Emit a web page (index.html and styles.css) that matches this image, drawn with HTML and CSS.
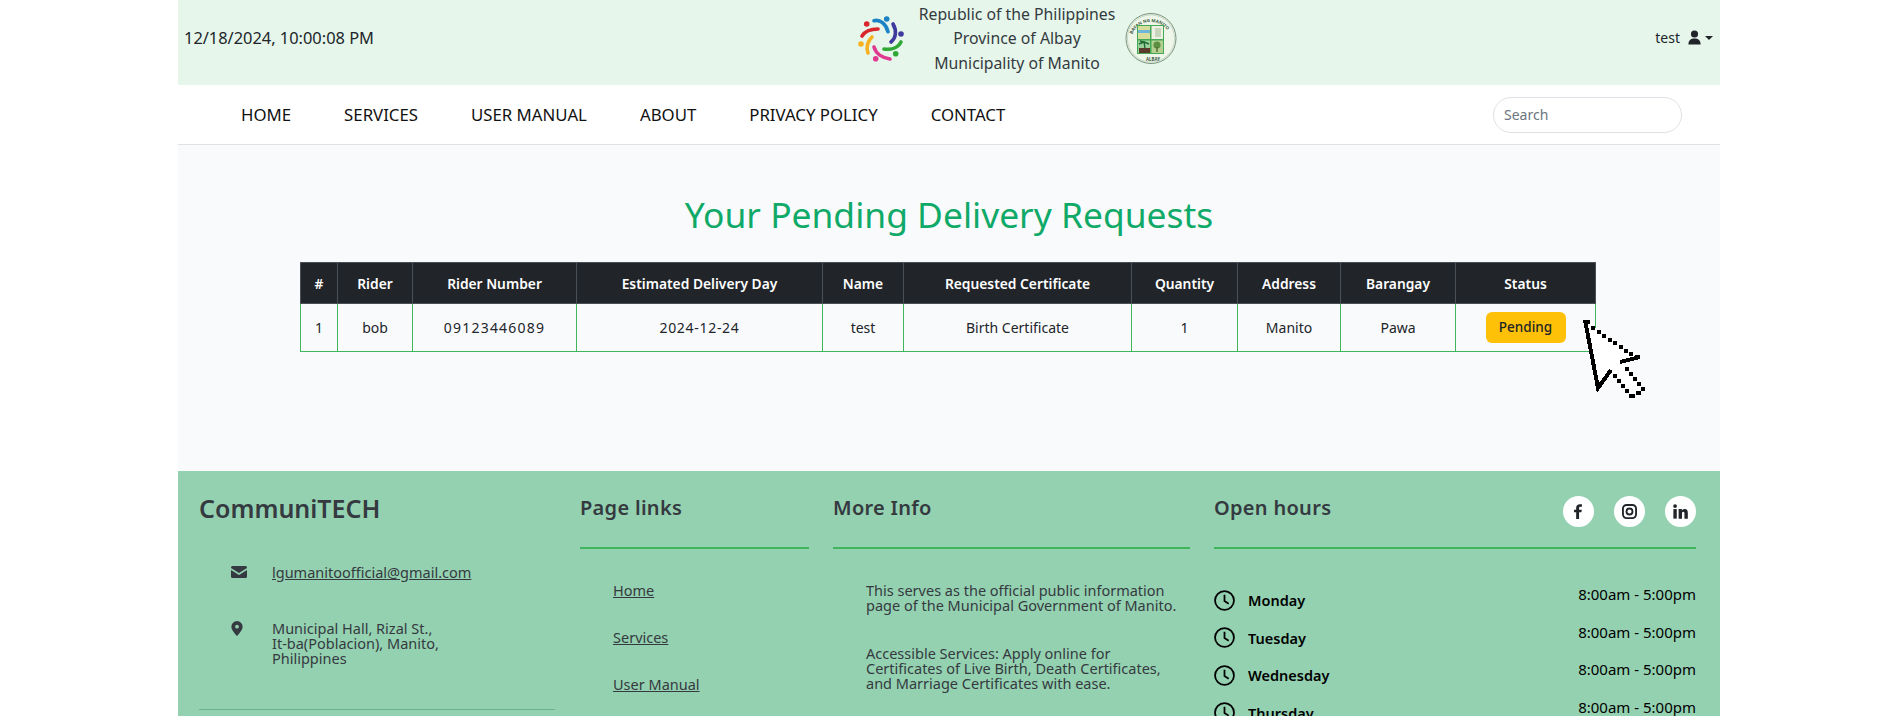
FILE: index.html
```html
<!DOCTYPE html>
<html>
    <head>
        <link rel="stylesheet" href="styles.css">
        <title>Your Pending Delivery Requests</title>
    </head>
    <body>
        <div class="page">
            <header class="top-bar">
                <div class="clock">12/18/2024, 10:00:08 PM</div>
                <div class="brand">
                    <svg class="logo-people" viewBox="0 0 60 60">
                        <g fill="none" stroke-width="3.6" stroke-linecap="round">
                            <path d="M7 26 C10 21 16 19 23 19" stroke="#d9252b"/>
                            <path d="M19 10.7 C25 9 31 14 33 21.7" stroke="#1b82c5"/>
                            <path d="M38 14 C42 21 41 28 36 32" stroke="#3f3a9e"/>
                            <path d="M29 39 C36 40 43 38 46 32" stroke="#2fa836"/>
                            <path d="M19 37 C21 44 28 48 35 49" stroke="#e0398f"/>
                            <path d="M17 27 C13 31 11 37 13 43" stroke="#f6b221"/>
                        </g>
                        <circle cx="11.7" cy="14" r="2.8" fill="#d9252b"/>
                        <circle cx="31.7" cy="9" r="2.8" fill="#1b82c5"/>
                        <circle cx="46" cy="24" r="2.8" fill="#3f3a9e"/>
                        <circle cx="40.7" cy="43.7" r="2.8" fill="#2fa836"/>
                        <circle cx="20.7" cy="48.7" r="2.8" fill="#e0398f"/>
                        <circle cx="6" cy="34" r="2.8" fill="#f6b221"/>
                    </svg>
                    <div class="brand-text">
                        <div>Republic of the Philippines</div>
                        <div>Province of Albay</div>
                        <div>Municipality of Manito</div>
                    </div>
                    <svg class="logo-seal" viewBox="0 0 60 60">
                        <circle cx="31" cy="30.5" r="25" fill="#eef6ea" stroke="#5b7a60" stroke-width=".8"/>
                        <circle cx="31" cy="30.5" r="23.6" fill="none" stroke="#8aa68d" stroke-width=".4"/>
                        <path id="seal-arc" d="M11 30 A20.5 20.5 0 0 1 51 30" fill="none"/>
                        <text class="seal-text"><textPath href="#seal-arc" startOffset="4">BAYAN NG MANITO</textPath></text>
                        <text class="seal-text" x="26" y="52.5">ALBAY</text>
                        <rect x="17" y="17" width="27" height="29" fill="#43a955"/>
                        <rect x="18" y="18" width="12" height="13" fill="#d7dd9a"/>
                        <rect x="18" y="22" width="12" height="3" fill="#6fb6d8"/>
                        <rect x="31.5" y="18" width="11.5" height="13" fill="#eef0e4"/>
                        <rect x="35" y="20" width="6" height="9" fill="#c8d5bd"/>
                        <rect x="18" y="32.5" width="12" height="12.5" fill="#9dcf9a"/>
                        <path d="M24 33 L25 41 M24 34 L19 36 M24 34 L29 36 M24 34 L20 33" stroke="#1f6a34" stroke-width="1.4" fill="none"/>
                        <rect x="19" y="40" width="11" height="5" fill="#5a3a2a"/>
                        <rect x="31.5" y="32.5" width="11.5" height="12.5" fill="#b4cf8f"/>
                        <circle cx="37" cy="37" r="3.6" fill="#5d8f43"/>
                        <rect x="36.4" y="39" width="1.2" height="5" fill="#4a5a2a"/>
                    </svg>
                </div>
                <div class="user">
                    <span>test</span>
                    <svg class="user-icon" viewBox="0 0 16 16"><circle cx="8" cy="4.2" r="3.8"/><path d="M1.5 15.5 C1.5 11 4 9 8 9 C12 9 14.5 11 14.5 15.5 Z"/></svg>
                    <span class="caret"></span>
                </div>
            </header>

            <nav class="main-nav">
                <ul class="nav-links">
                    <li>HOME</li>
                    <li>SERVICES</li>
                    <li>USER MANUAL</li>
                    <li>ABOUT</li>
                    <li>PRIVACY POLICY</li>
                    <li>CONTACT</li>
                </ul>
                <input class="search" type="text" placeholder="Search">
            </nav>

            <main class="content">
                <h1 class="page-title">Your Pending Delivery Requests</h1>
                <table class="requests">
                    <thead>
                        <tr>
                            <th>#</th>
                            <th>Rider</th>
                            <th>Rider Number</th>
                            <th>Estimated Delivery Day</th>
                            <th>Name</th>
                            <th>Requested Certificate</th>
                            <th>Quantity</th>
                            <th>Address</th>
                            <th>Barangay</th>
                            <th>Status</th>
                        </tr>
                    </thead>
                    <tbody>
                        <tr>
                            <td>1</td>
                            <td>bob</td>
                            <td class="phone">09123446089</td>
                            <td class="date">2024-12-24</td>
                            <td>test</td>
                            <td>Birth Certificate</td>
                            <td>1</td>
                            <td>Manito</td>
                            <td>Pawa</td>
                            <td><span class="badge">Pending</span></td>
                        </tr>
                    </tbody>
                </table>
            </main>

            <footer class="footer">
                <div class="col col-contact">
                    <h2 class="brand-name">CommuniTECH</h2>
                    <div class="contact-row first">
                        <svg class="contact-icon" viewBox="0 0 16 12"><path d="M0 1.5 A1.5 1.5 0 0 1 1.5 0 H14.5 A1.5 1.5 0 0 1 16 1.5 V2 L8 7 L0 2 Z"/><path d="M0 4 L8 9 L16 4 V10.5 A1.5 1.5 0 0 1 14.5 12 H1.5 A1.5 1.5 0 0 1 0 10.5 Z"/></svg>
                        <a class="link">lgumanitoofficial@gmail.com</a>
                    </div>
                    <div class="contact-row second">
                        <svg class="contact-icon pin" viewBox="0 0 12 16"><path fill-rule="evenodd" d="M6 0 A6 6 0 0 1 12 6 C12 9 8 14 6 16 C4 14 0 9 0 6 A6 6 0 0 1 6 0 Z M6 4 A2 2 0 1 0 6 8 A2 2 0 1 0 6 4 Z"/></svg>
                        <div class="address">Municipal Hall, Rizal St.,<br>It-ba(Poblacion), Manito,<br>Philippines</div>
                    </div>
                    <div class="contact-rule"></div>
                </div>

                <div class="col col-links">
                    <h3 class="col-title">Page links</h3>
                    <ul class="page-links">
                        <li><a class="link">Home</a></li>
                        <li><a class="link">Services</a></li>
                        <li><a class="link">User Manual</a></li>
                    </ul>
                </div>

                <div class="col col-info">
                    <h3 class="col-title">More Info</h3>
                    <div class="info-text">
                        <p>This serves as the official public information page of the Municipal Government of Manito.</p>
                        <p>Accessible Services: Apply online for Certificates of Live Birth, Death Certificates, and Marriage Certificates with ease.</p>
                    </div>
                </div>

                <div class="col col-hours">
                    <div class="hours-head">
                        <h3 class="col-title">Open hours</h3>
                        <div class="socials">
                            <span class="social"><svg viewBox="0 0 12 18"><path d="M3.2 18 V10 H0.6 V6.8 H3.2 V4.6 C3.2 1.7 5 0.2 7.5 0.2 C8.7 0.2 9.8 0.3 10.1 0.4 V3.2 H8.4 C7 3.2 6.7 3.9 6.7 4.8 V6.8 H10 L9.5 10 H6.7 V18 Z"/></svg></span>
                            <span class="social"><svg viewBox="0 0 16 16"><rect x="1" y="1" width="14" height="14" rx="4" fill="none" stroke="#212529" stroke-width="2"/><circle cx="8" cy="8" r="3.2" fill="none" stroke="#212529" stroke-width="2"/></svg></span>
                            <span class="social"><svg viewBox="0 0 16 16"><circle cx="2.2" cy="2.2" r="2"/><rect x="0.4" y="5.4" width="3.6" height="10.2"/><path d="M6 5.4 H9.4 V6.9 C10 5.9 11.2 5.2 12.6 5.2 C15 5.2 15.8 6.9 15.8 9.4 V15.6 H12.2 V10.2 C12.2 9 11.9 8.2 10.9 8.2 C9.9 8.2 9.6 9 9.6 10.2 V15.6 H6 Z"/></svg></span>
                        </div>
                    </div>
                    <ul class="hours">
                        <li><span class="day"><svg class="clock-icon" viewBox="0 0 20 20"><circle cx="10" cy="10" r="9"/><path d="M10 4.5 V10.5 L14 13"/></svg>Monday</span><span class="time">8:00am - 5:00pm</span></li>
                        <li><span class="day"><svg class="clock-icon" viewBox="0 0 20 20"><circle cx="10" cy="10" r="9"/><path d="M10 4.5 V10.5 L14 13"/></svg>Tuesday</span><span class="time">8:00am - 5:00pm</span></li>
                        <li><span class="day"><svg class="clock-icon" viewBox="0 0 20 20"><circle cx="10" cy="10" r="9"/><path d="M10 4.5 V10.5 L14 13"/></svg>Wednesday</span><span class="time">8:00am - 5:00pm</span></li>
                        <li><span class="day"><svg class="clock-icon" viewBox="0 0 20 20"><circle cx="10" cy="10" r="9"/><path d="M10 4.5 V10.5 L14 13"/></svg>Thursday</span><span class="time">8:00am - 5:00pm</span></li>
                    </ul>
                </div>
            </footer>

            <!-- mouse pointer sitting on top of the table -->
            <svg class="pointer" viewBox="0 0 68 84" shape-rendering="crispEdges">
                <path d="M5 5 L18 72 L30 54 L50 79 L63 74 L41 46 L60 41 Z" fill="#fff"/>
                <path d="M5 4 L18 72 L31 54 M40 46 L60 41" fill="none" stroke="#000" stroke-width="4"/>
                <path d="M6 4 h4 v4 h-4 Z M11 10 h4 v4 h-4 Z M17 14 h4 v4 h-4 Z M22 18 h4 v4 h-4 Z M28 22 h4 v4 h-4 Z M33 25 h4 v4 h-4 Z M39 29 h4 v4 h-4 Z M44 33 h4 v4 h-4 Z M49 36 h4 v4 h-4 Z M55 39 h4 v4 h-4 Z"/>
                <path d="M33 58 h4 v4 h-4 Z M37 63 h4 v4 h-4 Z M41 68 h4 v4 h-4 Z M45 73 h4 v4 h-4 Z M49 78 h6 v4 h-6 Z M56 75 h5 v4 h-5 Z M61 71 h4 v4 h-4 Z M57 66 h4 v4 h-4 Z M53 61 h4 v4 h-4 Z M49 56 h4 v4 h-4 Z M45 51 h4 v4 h-4 Z"/>
            </svg>
        </div>
    </body>
</html>
```

FILE: styles.css
```css
html, body {
  margin: 0;
  padding: 0;
  height: 716px;
  overflow: hidden;
  background-color: #fff;
}

body {
  font-family: "Noto Sans", sans-serif;
  color: #212529;
}

.page {
  position: relative;
  width: 1542px;
  margin-left: 178px;
}

/* top bar */
.top-bar {
  height: 85px;
  background-color: #e6f6eb;
  display: flex;
  align-items: center;
  padding: 0 7px 0 6px;
  box-sizing: border-box;
}

.clock {
  flex: 0 0 671px;
  font-size: 16.4px;
  margin-bottom: 10px;
}

.brand {
  display: flex;
  align-items: center;
  height: 85px;
}

.logo-people {
  width: 60px;
  height: 60px;
  margin-right: 2px;
  margin-bottom: 5px;
}

.brand-text {
  font-size: 15.8px;
  line-height: 24.2px;
  text-align: center;
  width: 200px;
  margin-bottom: 8px;
  color: #343a40;
}

.logo-seal {
  width: 60px;
  height: 60px;
  margin-left: 3px;
  margin-bottom: 9px;
}

.seal-text {
  font-size: 4.4px;
  font-weight: 700;
  fill: #3d5a44;
}

.user {
  flex: 1;
  display: flex;
  align-items: center;
  justify-content: flex-end;
  font-size: 14px;
  margin-bottom: 10px;
}

.user-icon {
  width: 15px;
  height: 15px;
  margin-left: 7px;
  fill: #212529;
}

.caret {
  margin-left: 3px;
  border-top: 4px solid #212529;
  border-left: 4px solid transparent;
  border-right: 4px solid transparent;
}

/* nav */
.main-nav {
  height: 60px;
  background-color: #fff;
  border-bottom: 1px solid #dee2e6;
  box-sizing: border-box;
  display: flex;
  align-items: center;
  justify-content: space-between;
  padding: 0 38px 0 63px;
}

.nav-links {
  list-style: none;
  display: flex;
  gap: 53px;
  margin: 0 0 1px 0;
  padding: 0;
  font-size: 16.8px;
  color: #111;
}

.search {
  width: 189px;
  height: 36px;
  box-sizing: border-box;
  border: 1px solid #dee2e6;
  border-radius: 18px;
  padding: 0 10px;
  font-family: inherit;
  font-size: 14px;
  background-color: #fff;
}

.search::placeholder {
  color: #6c757d;
}

/* table part */
.content {
  height: 326px;
  background-color: #f9fafc;
  box-sizing: border-box;
  padding-top: 46px;
}

.page-title {
  margin: 0 0 25px 0;
  font-size: 35.4px;
  font-weight: 400;
  line-height: 46px;
  text-align: center;
  color: #0fa968;
}

.requests {
  width: 1296px;
  margin-left: 122px;
  table-layout: fixed;
  border-collapse: collapse;
  font-size: 14px;
  text-align: center;
}

.requests th {
  height: 40px;
  padding: 0;
  background-color: #212529;
  color: #fff;
  border: 1px solid #495057;
  font-size: 13.8px;
  font-weight: 600;
}

.requests td {
  height: 47px;
  padding: 0;
  border: 1px solid #3fb55e;
}

.requests th:nth-child(1) { width: 36px; }
.requests th:nth-child(2) { width: 74px; }
.requests th:nth-child(3) { width: 163px; }
.requests th:nth-child(4) { width: 245px; }
.requests th:nth-child(5) { width: 80px; }
.requests th:nth-child(6) { width: 227px; }
.requests th:nth-child(7) { width: 105px; }
.requests th:nth-child(8) { width: 102px; }
.requests th:nth-child(9) { width: 114px; }

.requests .phone {
  letter-spacing: 1.2px;
}

.requests .date {
  letter-spacing: .7px;
}

.badge {
  display: inline-block;
  width: 80px;
  height: 31px;
  line-height: 31px;
  border-radius: 6px;
  background-color: #ffc107;
  font-size: 13.5px;
  font-weight: 500;
  vertical-align: middle;
}

.pointer {
  position: absolute;
  left: 1402px;
  top: 316px;
  width: 68px;
  height: 84px;
}

/* footer */
.footer {
  height: 245px;
  overflow: hidden;
  background-color: #94d1b1;
  color: #343a40;
  display: grid;
  grid-template-columns: 381px 253px 381px 482px;
  padding: 0 24px 0 21px;
  box-sizing: border-box;
}

.col-contact {
  padding-right: 25px;
}

.col-links {
  padding-right: 24px;
}

.col-info {
  padding-right: 24px;
}

.col-title {
  margin: 23px 0 0 0;
  font-size: 20px;
  font-weight: 600;
  line-height: 28px;
  height: 53px;
  border-bottom: 2px solid #3fb55e;
  letter-spacing: .3px;
}

.brand-name {
  margin: 22px 0 0 0;
  font-size: 25px;
  font-weight: 600;
  line-height: 30px;
}

.link {
  color: #343a40;
  text-decoration: underline;
}

.contact-row {
  display: flex;
  font-size: 14.5px;
  padding-left: 32px;
}

.contact-row.first {
  margin-top: 39px;
  line-height: 20px;
}

.contact-row.second {
  margin-top: 39px;
}

.contact-icon {
  width: 16px;
  height: 12px;
  fill: #343a40;
  margin-right: 25px;
  margin-top: 4px;
}

.contact-icon.pin {
  width: 12px;
  height: 15px;
  margin-right: 29px;
  margin-top: 0;
}

.address {
  line-height: 15px;
}

.contact-rule {
  height: 1px;
  margin-top: 43px;
  background-color: #6cb48c;
}

.page-links {
  list-style: none;
  margin: 31px 0 0 0;
  padding: 0 0 0 33px;
  font-size: 14.5px;
}

.page-links li {
  height: 47px;
  line-height: 20px;
}

.info-text {
  font-size: 14.5px;
  line-height: 15px;
  padding: 34px 10px 0 33px;
}

.info-text p {
  margin: 0 0 33px 0;
}

.hours-head {
  position: relative;
}

.socials {
  position: absolute;
  top: 2px;
  right: 0;
  display: flex;
  gap: 20px;
}

.social {
  width: 31px;
  height: 31px;
  border-radius: 50%;
  background-color: #fff;
  display: flex;
  align-items: center;
  justify-content: center;
}

.social svg {
  width: 15px;
  height: 15px;
  fill: #212529;
}

.hours {
  list-style: none;
  margin: 40px 0 0 0;
  padding: 0;
  color: #000;
}

.hours li {
  height: 37.5px;
  display: flex;
  justify-content: space-between;
  font-size: 15px;
}

.day {
  display: flex;
  align-items: center;
  font-size: 14.5px;
  font-weight: 600;
  height: 22px;
}

.clock-icon {
  width: 21px;
  height: 21px;
  margin-right: 13px;
  fill: none;
  stroke: #000;
  stroke-width: 1.7;
}

.time {
  line-height: 16px;
  margin-top: -3px;
}
```
